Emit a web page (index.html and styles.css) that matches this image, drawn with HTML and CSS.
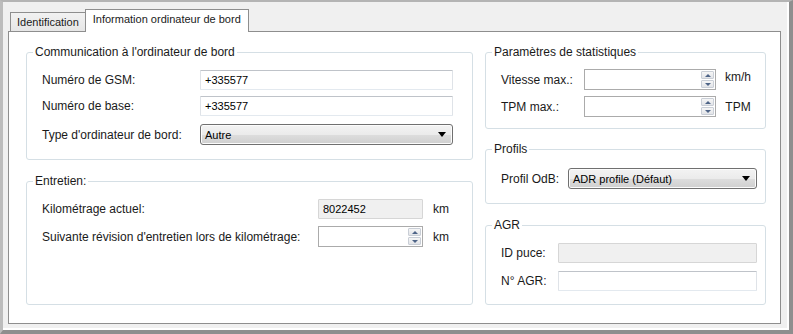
FILE: index.html
```html
<!doctype html>
<html lang="fr">

<head>
  <meta charset="UTF-8" />
  <meta name="viewport" content="width=device-width, initial-scale=1.0" />
  <title>Information ordinateur de bord</title>
  <link rel="stylesheet" href="styles.css">
</head>

<body>
  <div class="window">
    <div class="tabs">
      <div class="tab">Identification</div>
      <div class="tab active">Information ordinateur de bord</div>
    </div>

    <div class="panel">
      <div class="col col-left">
        <fieldset class="group group-comm">
          <legend>Communication à l'ordinateur de bord</legend>
          <div class="row">
            <label class="lbl lbl-comm">Numéro de GSM:</label>
            <input class="field field-comm" type="text" value="+335577" />
          </div>
          <div class="row">
            <label class="lbl lbl-comm">Numéro de base:</label>
            <input class="field field-comm" type="text" value="+335577" />
          </div>
          <div class="row row-select">
            <label class="lbl lbl-comm">Type d'ordinateur de bord:</label>
            <div class="select field-comm"><span>Autre</span><i class="caret"></i></div>
          </div>
        </fieldset>

        <fieldset class="group group-maint">
          <legend>Entretien:</legend>
          <div class="row">
            <label class="lbl lbl-maint">Kilométrage actuel:</label>
            <input class="field field-readonly field-km" type="text" value="8022452" readonly />
            <span class="unit unit-km">km</span>
          </div>
          <div class="row row-wide">
            <label class="lbl lbl-maint">Suivante révision d'entretien lors de kilométrage:</label>
            <div class="spin field-km">
              <input type="text" />
              <span class="spin-btns"><span class="up"></span><span class="down"></span></span>
            </div>
            <span class="unit unit-km">km</span>
          </div>
        </fieldset>
      </div>

      <div class="col col-right">
        <fieldset class="group group-stats">
          <legend>Paramètres de statistiques</legend>
          <div class="row row-wide">
            <label class="lbl lbl-stats">Vitesse max.:</label>
            <div class="spin field-stats">
              <input type="text" />
              <span class="spin-btns"><span class="up"></span><span class="down"></span></span>
            </div>
            <span class="unit unit-stats unit-raise">km/h</span>
          </div>
          <div class="row row-wide">
            <label class="lbl lbl-stats">TPM max.:</label>
            <div class="spin field-stats">
              <input type="text" />
              <span class="spin-btns"><span class="up"></span><span class="down"></span></span>
            </div>
            <span class="unit unit-stats">TPM</span>
          </div>
        </fieldset>

        <fieldset class="group group-prof">
          <legend>Profils</legend>
          <div class="row row-wide">
            <label class="lbl lbl-prof">Profil OdB:</label>
            <div class="select field-prof"><span>ADR profile (Défaut)</span><i class="caret"></i></div>
          </div>
        </fieldset>

        <fieldset class="group group-agr">
          <legend>AGR</legend>
          <div class="row">
            <label class="lbl lbl-agr">ID puce:</label>
            <input class="field field-readonly field-agr" type="text" readonly />
          </div>
          <div class="row row-wide">
            <label class="lbl lbl-agr">N° AGR:</label>
            <input class="field field-agr" type="text" />
          </div>
        </fieldset>
      </div>
    </div>
  </div>
</body>

</html>
```

FILE: styles.css
```css
* {
  box-sizing: border-box;
}

html,
body {
  margin: 0;
  padding: 0;
  width: 793px;
  height: 334px;
  overflow: hidden;
  font-family: 'Liberation Sans', Arial, sans-serif;
  font-size: 12px;
  color: #1a1a1a;
  background-color: #f0f0f0;
}

.window {
  width: 793px;
  height: 334px;
  border-top: 2px solid #b4b4b4;
  border-left: 3px solid #bcbcbc;
  border-right: 4px solid #8e8e8e;
  border-bottom: 4px solid #8e8e8e;
  box-shadow: inset -2px -2px 0 #ffffff;
  padding: 7px 0 0 5px;
}

/* tabs */

.tabs {
  display: flex;
  align-items: flex-end;
  height: 23px;
  margin-bottom: -1px;
  padding-left: 2px;
  position: relative;
  z-index: 1;
}

.tab {
  height: 19px;
  margin-bottom: 1px;
  padding: 0 6px 0 6px;
  line-height: 18px;
  font-size: 11px;
  border: 1px solid #8e8e8e;
  border-bottom: none;
  background: linear-gradient(#f2f2f2, #e6e6e6);
}

.tab.active {
  height: 23px;
  margin-bottom: 0;
  margin-left: -1px;
  padding: 0 7px;
  line-height: 19px;
  background: #ffffff;
}

.panel {
  width: 773px;
  height: 293px;
  background: #ffffff;
  border: 1px solid #8e8e8e;
  display: flex;
  gap: 12px;
  padding: 13px 0 18px 17px;
}

.col {
  display: flex;
  flex-direction: column;
}

.col-left {
  width: 447px;
  gap: 14px;
}

.col-right {
  width: 281px;
  gap: 13px;
}

/* group boxes */

.group {
  margin: 0;
  min-width: 0;
  border: 1px solid #d5dfe5;
  border-radius: 3px;
  display: flex;
  flex-direction: column;
  gap: 6px;
}

.group legend {
  margin-left: -9px;
  padding: 0 2px;
  line-height: 14px;
  color: #1a1a1a;
}

.group-comm {
  padding: 11px 0 14px 15px;
}

.group-maint {
  flex: 1;
  gap: 7px;
  padding: 11px 0 0 15px;
}

.group-stats {
  padding: 10px 0 11px 15px;
}

.group-prof {
  padding: 12px 0 14px 15px;
}

.group-agr {
  margin-top: 1px;
  gap: 7px;
  padding: 11px 0 13px 15px;
}

.row {
  display: flex;
  align-items: center;
  height: 20px;
}

.row-select {
  height: 21px;
  margin-top: 2px;
}

.row-wide {
  height: 21px;
}

.lbl {
  flex: none;
  white-space: nowrap;
}

.lbl-comm {
  width: 158px;
}

.lbl-maint {
  width: 276px;
}

.lbl-stats {
  width: 83px;
}

.lbl-prof {
  width: 67px;
}

.lbl-agr {
  width: 57px;
}

/* inputs */

.field {
  height: 20px;
  margin: 0;
  padding: 0 4px;
  font-family: inherit;
  font-size: 11px;
  color: #000000;
  background: #ffffff;
  border: 1px solid;
  border-color: #bfc3c9 #dfe3e8 #e3e9ef #dfe3e8;
  border-radius: 1px;
  outline: none;
}

.field-readonly {
  background: #f0f0f0;
  border-color: #d6d6d6;
}

.field-comm {
  width: 253px;
}

.field-km {
  width: 105px;
}

.field-stats {
  width: 132px;
}

.field-prof {
  width: 189px;
}

.field-agr {
  width: 199px;
}

.spin {
  display: flex;
  height: 21px;
  border: 1px solid #ababab;
  background: #ffffff;
  padding: 1px;
}

.spin input {
  flex: 1;
  min-width: 0;
  border: none;
  outline: none;
  padding: 0 3px;
  font-family: inherit;
  font-size: 11px;
}

.spin-btns {
  width: 13px;
  display: flex;
  flex-direction: column;
  gap: 1px;
}

.spin-btns span {
  flex: 1;
  display: flex;
  align-items: center;
  justify-content: center;
  border: 1px solid #c9ced6;
  border-radius: 1px;
  background: linear-gradient(#f6f6f6, #e2e4e8);
}

.spin-btns .up::after,
.spin-btns .down::after {
  content: "";
  width: 0;
  height: 0;
  border-left: 3px solid transparent;
  border-right: 3px solid transparent;
}

.spin-btns .up::after {
  border-bottom: 3px solid #4e6487;
}

.spin-btns .down::after {
  border-top: 3px solid #4e6487;
}

.select {
  height: 21px;
  display: flex;
  align-items: center;
  justify-content: space-between;
  padding: 0 6px 0 4px;
  font-size: 11px;
  color: #000000;
  border: 1px solid #707070;
  border-radius: 3px;
  background: linear-gradient(#f3f3f3 0%, #ebebeb 50%, #dddddd 51%, #cfcfcf 100%);
  box-shadow: inset 0 0 0 1px #fcfcfc;
}

.caret {
  width: 0;
  height: 0;
  border-left: 4px solid transparent;
  border-right: 4px solid transparent;
  border-top: 5px solid #000000;
}

.unit {
  white-space: nowrap;
}

.unit-km {
  margin-left: 10px;
}

.unit-stats {
  width: 44px;
  text-align: center;
}

.unit-raise {
  margin-top: -6px;
}
```
